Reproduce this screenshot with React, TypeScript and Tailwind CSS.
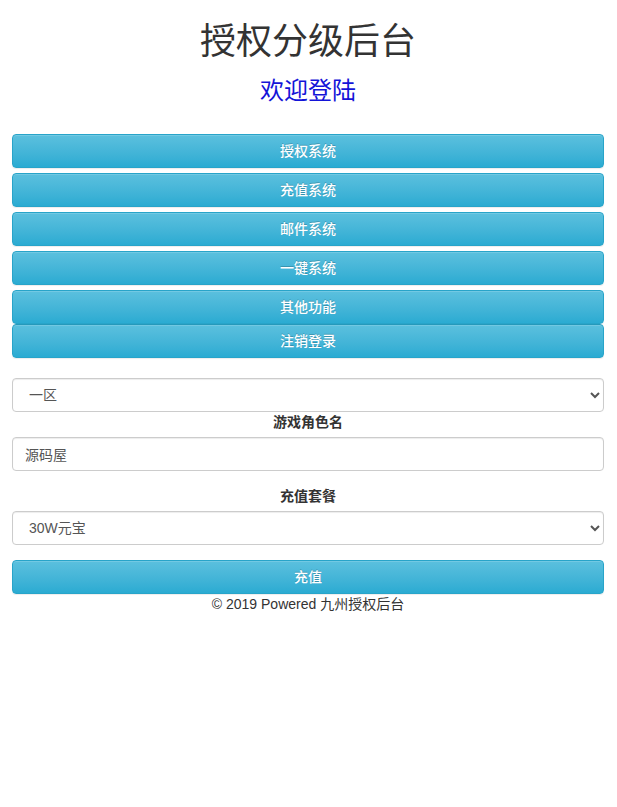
import React from "react"

const menu = ["授权系统", "充值系统", "邮件系统", "一键系统", "其他功能"]

const btn =
    "block w-full h-[34px] rounded-[4px] border border-[#28a4c9] bg-gradient-to-b from-[#5bc0de] to-[#2aabd2] text-white text-[14px] font-medium [text-shadow:0_-1px_0_rgba(0,0,0,0.2)] shadow-[inset_0_1px_0_rgba(255,255,255,0.15),0_1px_1px_rgba(0,0,0,0.075)]"

const field =
    "block w-full h-[34px] px-3 rounded-[4px] border border-[#ccc] bg-white text-[14px] text-[#555] shadow-[inset_0_1px_1px_rgba(0,0,0,0.075)] outline-none"

export default function App() {
    const [zone, setZone] = React.useState("1")
    const [roleName, setRoleName] = React.useState("源码屋")
    const [pack, setPack] = React.useState("30w")

    return (
        <div className="min-h-screen bg-white pl-3 pr-[13px] text-[#333] font-['Liberation_Sans','Noto_Sans_CJK_SC',sans-serif]">
            <h1 className="pt-[22px] text-center text-[36px] leading-[40px]">授权分级后台</h1>
            <h3 className="mt-[15px] text-center text-[24px] leading-[28px] text-[#1414d8]">欢迎登陆</h3>

            <div className="mt-[29px] flex flex-col gap-[5px]">
                {menu.map((m) => (
                    <button key={m} className={btn}>{m}</button>
                ))}
            </div>
            <button className={btn}>注销登录</button>

            <form className="mt-[20px]" onSubmit={(e) => e.preventDefault()}>
                <select className={field} value={zone} onChange={(e) => setZone(e.target.value)}>
                    <option value="1">一区</option>
                    <option value="2">二区</option>
                </select>

                <div className="mb-[15px]">
                    <label className="block mb-[5px] text-center text-[14px] leading-[20px] font-bold">游戏角色名</label>
                    <input
                        type="text"
                        className={field}
                        value={roleName}
                        onChange={(e) => setRoleName(e.target.value)}
                    />
                </div>

                <div className="mb-[15px]">
                    <label className="block mb-[5px] text-center text-[14px] leading-[20px] font-bold">充值套餐</label>
                    <select className={field} value={pack} onChange={(e) => setPack(e.target.value)}>
                        <option value="30w">30W元宝</option>
                        <option value="60w">60W元宝</option>
                    </select>
                </div>

                <button type="submit" className={btn}>充值</button>
            </form>

            <p className="text-center text-[14px] leading-[20px]">© 2019 Powered 九州授权后台</p>
        </div>
    )
}
